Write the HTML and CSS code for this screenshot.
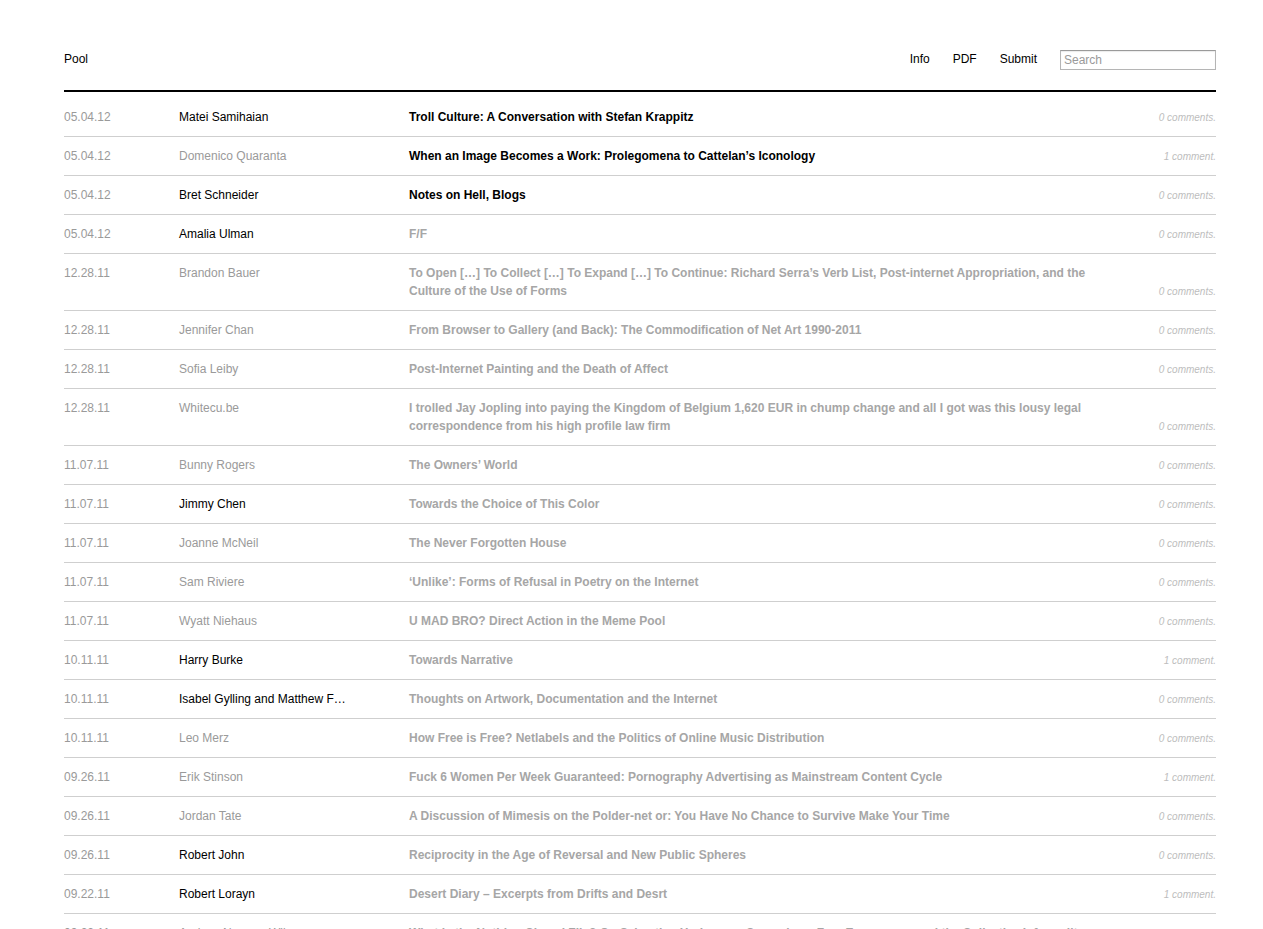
FILE: index.html
```html
<!DOCTYPE html>
<html lang="en">
<head>
<meta charset="utf-8">
<title>Pool</title>
<link rel="stylesheet" href="styles.css">
</head>
<body>
<div class="page">
  <header class="header">
    <a class="brand" href="#">Pool</a>
    <nav class="nav">
      <a href="#">Info</a>
      <a href="#">PDF</a>
      <a href="#">Submit</a>
      <input class="search" type="text" placeholder="Search">
    </nav>
  </header>
  <ul class="list">
    <li class="row"><span class="date">05.04.12</span><span class="author on">Matei Samihaian</span><span class="title on">Troll Culture: A Conversation with Stefan Krappitz</span><span class="comments">0 comments.</span></li>
    <li class="row"><span class="date">05.04.12</span><span class="author">Domenico Quaranta</span><span class="title on">When an Image Becomes a Work: Prolegomena to Cattelan’s Iconology</span><span class="comments">1 comment.</span></li>
    <li class="row"><span class="date">05.04.12</span><span class="author on">Bret Schneider</span><span class="title on">Notes on Hell, Blogs</span><span class="comments">0 comments.</span></li>
    <li class="row"><span class="date">05.04.12</span><span class="author on">Amalia Ulman</span><span class="title">F/F</span><span class="comments">0 comments.</span></li>
    <li class="row"><span class="date">12.28.11</span><span class="author">Brandon Bauer</span><span class="title">To Open […] To Collect […] To Expand […] To Continue: Richard Serra’s Verb List, Post-internet Appropriation, and the Culture of the Use of Forms</span><span class="comments">0 comments.</span></li>
    <li class="row"><span class="date">12.28.11</span><span class="author">Jennifer Chan</span><span class="title">From Browser to Gallery (and Back): The Commodification of Net Art 1990-2011</span><span class="comments">0 comments.</span></li>
    <li class="row"><span class="date">12.28.11</span><span class="author">Sofia Leiby</span><span class="title">Post-Internet Painting and the Death of Affect</span><span class="comments">0 comments.</span></li>
    <li class="row"><span class="date">12.28.11</span><span class="author">Whitecu.be</span><span class="title">I trolled Jay Jopling into paying the Kingdom of Belgium 1,620 EUR in chump change and all I got was this lousy legal correspondence from his high profile law firm</span><span class="comments">0 comments.</span></li>
    <li class="row"><span class="date">11.07.11</span><span class="author">Bunny Rogers</span><span class="title">The Owners’ World</span><span class="comments">0 comments.</span></li>
    <li class="row"><span class="date">11.07.11</span><span class="author on">Jimmy Chen</span><span class="title">Towards the Choice of This Color</span><span class="comments">0 comments.</span></li>
    <li class="row"><span class="date">11.07.11</span><span class="author">Joanne McNeil</span><span class="title">The Never Forgotten House</span><span class="comments">0 comments.</span></li>
    <li class="row"><span class="date">11.07.11</span><span class="author">Sam Riviere</span><span class="title">‘Unlike’: Forms of Refusal in Poetry on the Internet</span><span class="comments">0 comments.</span></li>
    <li class="row"><span class="date">11.07.11</span><span class="author">Wyatt Niehaus</span><span class="title">U MAD BRO? Direct Action in the Meme Pool</span><span class="comments">0 comments.</span></li>
    <li class="row"><span class="date">10.11.11</span><span class="author on">Harry Burke</span><span class="title">Towards Narrative</span><span class="comments">1 comment.</span></li>
    <li class="row"><span class="date">10.11.11</span><span class="author on">Isabel Gylling and Matthew F…</span><span class="title">Thoughts on Artwork, Documentation and the Internet</span><span class="comments">0 comments.</span></li>
    <li class="row"><span class="date">10.11.11</span><span class="author">Leo Merz</span><span class="title">How Free is Free? Netlabels and the Politics of Online Music Distribution</span><span class="comments">0 comments.</span></li>
    <li class="row"><span class="date">09.26.11</span><span class="author">Erik Stinson</span><span class="title">Fuck 6 Women Per Week Guaranteed: Pornography Advertising as Mainstream Content Cycle</span><span class="comments">1 comment.</span></li>
    <li class="row"><span class="date">09.26.11</span><span class="author">Jordan Tate</span><span class="title">A Discussion of Mimesis on the Polder-net or: You Have No Chance to Survive Make Your Time</span><span class="comments">0 comments.</span></li>
    <li class="row"><span class="date">09.26.11</span><span class="author on">Robert John</span><span class="title">Reciprocity in the Age of Reversal and New Public Spheres</span><span class="comments">0 comments.</span></li>
    <li class="row"><span class="date">09.22.11</span><span class="author on">Robert Lorayn</span><span class="title">Desert Diary – Excerpts from Drifts and Desrt</span><span class="comments">1 comment.</span></li>
    <li class="row"><span class="date">09.22.11</span><span class="author">Andrew Norman Wilson</span><span class="title">What is the Nothing Closed File? On Sebastian Hudson on Cosmology, Free Ecommerce and the Collective Informality Exhibit</span><span class="comments">0 comments.</span></li>
  </ul>
</div>
</body>
</html>
```

FILE: styles.css
```css
html, body {
  margin: 0;
  padding: 0;
  background: #fff;
}

body {
  font-family: "Liberation Sans", Arial, Helvetica, sans-serif;
  font-size: 12px;
  line-height: 18px;
  color: #000;
}

a {
  color: #000;
  text-decoration: none;
}

.page {
  width: 1152px;
  margin-left: 64px;
}

.header {
  display: flex;
  align-items: center;
  justify-content: space-between;
  height: 22px;
  padding: 48px 0 20px;
  border-bottom: 2px solid #000;
}

.nav {
  display: flex;
  align-items: center;
  gap: 23px;
}

.search {
  box-sizing: border-box;
  width: 156px;
  height: 20px;
  margin: 2px 0 0;
  padding: 1px 3px;
  border: 1px solid #b5b5b5;
  border-top-color: #9a9a9a;
  box-shadow: inset 0 1px 1px rgba(0,0,0,0.08);
  font-family: "Liberation Sans", Arial, Helvetica, sans-serif;
  font-size: 12px;
  color: #000;
  outline: none;
}

.search::placeholder {
  color: #9a9a9a;
}

.list {
  list-style: none;
  margin: 6px 0 0;
  padding: 0;
}

.row {
  display: grid;
  grid-template-columns: 115px 230px 690px 1fr;
  padding: 10px 0;
  border-bottom: 1px solid #cfcfcf;
}

.date {
  color: #9a9a9a;
}

.author {
  color: #9a9a9a;
}

.author.on {
  color: #000;
}

.title {
  font-weight: bold;
  color: #a6a6a6;
}

.title.on {
  color: #000;
}

.comments {
  align-self: end;
  margin-bottom: -1px;
  text-align: right;
  font-style: italic;
  font-size: 10px;
  line-height: 18px;
  color: #bdbdbd;
}
```
